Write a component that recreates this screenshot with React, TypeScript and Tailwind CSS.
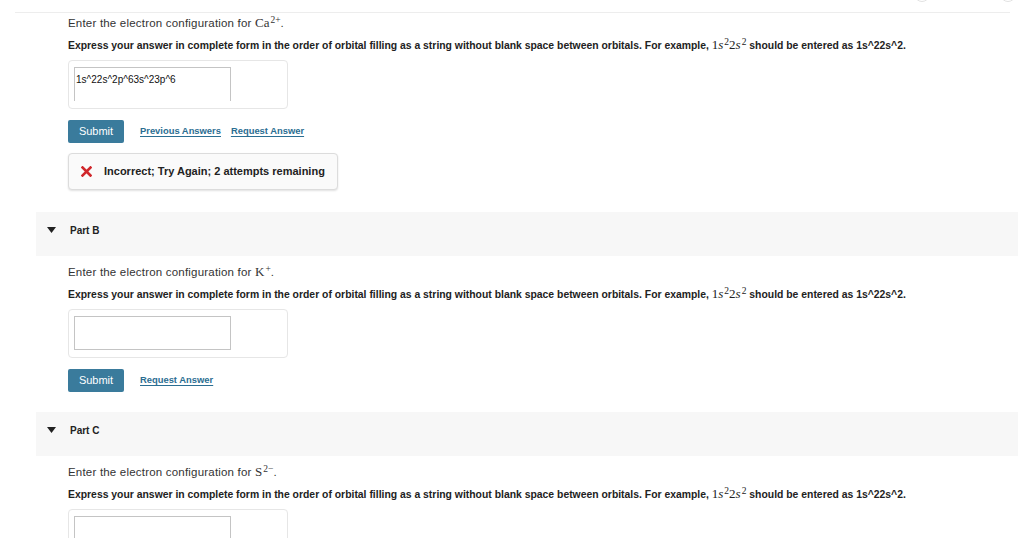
import React from "react";

const SANS = "font-['Liberation_Sans',Arial,Helvetica,sans-serif]";
const SERIF = "font-['Liberation_Serif','Times_New_Roman',serif]";

function Sup({ children }: { children: React.ReactNode }) {
  return <span className="relative -top-[4px] ml-[1px] text-[9.5px] leading-none">{children}</span>;
}

function Example() {
  return (
    <span className={`${SERIF} text-[13px] font-normal leading-none`}>
      1<i>s</i>
      <Sup>2</Sup>2<i>s</i>
      <Sup>2</Sup>
    </span>
  );
}

function Prompt({ ion, charge }: { ion: string; charge: string }) {
  return (
    <>
      <p className="h-[14px] text-[11.5px] tracking-[0.2px] leading-[14px] text-[#333] whitespace-nowrap">
        Enter the electron configuration for{" "}
        <span className={`${SERIF} text-[13px] leading-none tracking-normal`}>
          {ion}
          <Sup>{charge}</Sup>
        </span>
        .
      </p>
      <p className="mt-[8px] h-[14px] text-[10.4px] font-bold leading-[14px] text-[#222] whitespace-nowrap">
        Express your answer in complete form in the order of orbital filling as a string without blank
        space between orbitals. For example, <Example /> should be entered as 1s^22s^2.
      </p>
    </>
  );
}

function AnswerBox({ value, open }: { value?: string; open?: boolean }) {
  return (
    <div className="mt-[8px] w-[220px] h-[49px] rounded-[4px] border border-[#e6e6e6] pl-[5px] pt-[6px]">
      <div
        className={`h-[34px] w-[157px] border border-[#c4c4c4] px-[1px] pt-[6px] text-[10px] leading-[12px] text-[#111] ${
          open ? "border-b-0" : ""
        }`}
      >
        {value}
      </div>
    </div>
  );
}

function Links({ previous }: { previous?: boolean }) {
  return (
    <div className="mt-[11px] flex items-center gap-[16px]">
      <button
        type="button"
        className="h-[23px] w-[56px] rounded-[2px] bg-[#3a7b9c] text-[11px] text-white leading-[23px]"
      >
        Submit
      </button>
      <div className="flex gap-[10px] text-[9.4px] font-bold text-[#2b6e92] underline underline-offset-2">
        {previous && <a href="#">Previous Answers</a>}
        <a href="#">Request Answer</a>
      </div>
    </div>
  );
}

function PartHeader({ label }: { label: string }) {
  return (
    <div className="ml-[36px] mr-[6px] flex h-[44px] items-center bg-[#f7f7f7] pb-[8px] pl-[11px]">
      <svg width="9" height="6" viewBox="0 0 9 6" className="mr-[14px]">
        <path d="M0 0h9L4.5 6z" fill="#222" />
      </svg>
      <span className="text-[10px] font-bold text-[#222]">{label}</span>
    </div>
  );
}

export default function App() {
  return (
    <div className={`${SANS} relative h-[538px] w-[1024px] overflow-hidden bg-white`}>
      {/* bottom edges of toolbar circles above the fold */}
      <div className="absolute -top-[14px] left-[914px] h-[16px] w-[16px] rounded-full border border-[#e2e2e2]" />
      <div className="absolute -top-[14px] left-[1000px] h-[16px] w-[16px] rounded-full border border-[#e2e2e2]" />

      <div className="mx-[15px] mr-[14px] h-[13px] border-b border-[#ededed]" />

      {/* Part A */}
      <div className="pl-[68px] pt-[3px]">
        <Prompt ion="Ca" charge="2+" />
        <AnswerBox value="1s^22s^2p^63s^23p^6" open />
        <Links previous />
        <div className="mt-[10px] flex h-[37px] w-[270px] items-center rounded-[4px] border border-[#dcdcdc] bg-[#fafafa] pl-[12px] shadow-[0_1px_2px_rgba(0,0,0,0.12)]">
          <svg width="11" height="11" viewBox="0 0 11 11" className="mr-[12px]">
            <path d="M1.5 1.5l8 8M9.5 1.5l-8 8" stroke="#d0272b" strokeWidth="2.6" strokeLinecap="square" />
          </svg>
          <span className="text-[11px] font-bold text-[#222]">Incorrect; Try Again; 2 attempts remaining</span>
        </div>
      </div>

      {/* Part B */}
      <div className="mt-[22px]">
        <PartHeader label="Part B" />
      </div>
      <div className="pl-[68px] pt-[9px]">
        <Prompt ion="K" charge="+" />
        <AnswerBox />
        <Links />
      </div>

      {/* Part C */}
      <div className="mt-[20px]">
        <PartHeader label="Part C" />
      </div>
      <div className="pl-[68px] pt-[9px]">
        <Prompt ion="S" charge="2−" />
        <AnswerBox />
      </div>
    </div>
  );
}
